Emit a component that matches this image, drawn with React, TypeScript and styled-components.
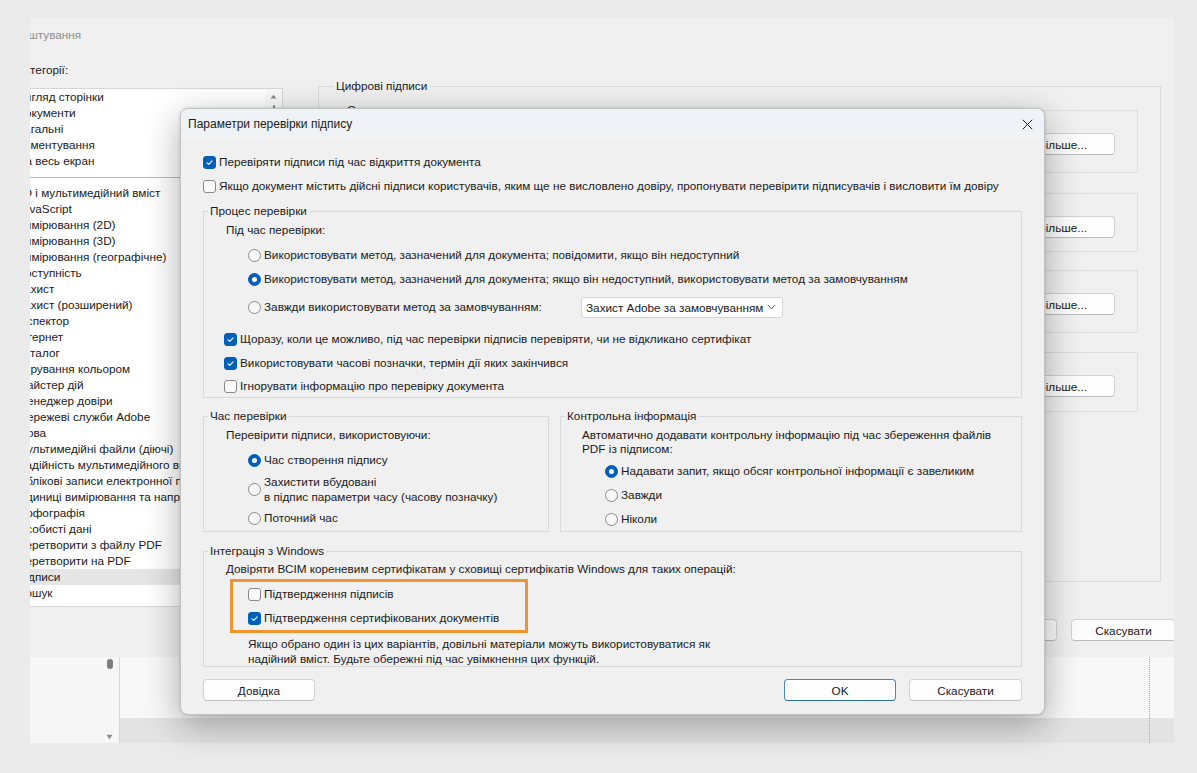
import React from "react";
import styled, { createGlobalStyle, css } from "styled-components";

const GlobalStyle = createGlobalStyle`
  html, body { margin: 0; padding: 0; }
  body {
    background: #ebebeb;
    font-family: "Liberation Sans", Arial, sans-serif;
    font-size: 11.75px;
    color: #1a1a1a;
  }
  * { box-sizing: border-box; }
`;

const Page = styled.div`
  position: relative;
  width: 1197px;
  height: 773px;
  padding: 19px 0 0 30px;
  overflow: hidden;
  background: #ebebeb;
`;

/* ---------- background preferences window (cropped) ---------- */

const Frame = styled.div`
  width: 1144px;
  height: 724px;
  overflow: hidden;
  display: flex;
  flex-direction: column;
`;

const PrefWindow = styled.div`
  flex: none;
  width: 1185px;
  height: 638px;
  margin-left: -25px;
  background: #f0f0f0;
  display: flex;
  flex-direction: column;
`;

const WinTitle = styled.div`
  height: 31px;
  display: flex;
  align-items: center;
  margin-left: -5px;
  color: #8e8e8e;
  white-space: nowrap;
`;

const WinBody = styled.div`
  height: 557px;
  display: flex;
  gap: 35px;
  padding: 0 29px 0 7px;
`;

const LeftCol = styled.div`
  width: 271px;
  display: flex;
  flex-direction: column;
`;

const CatLabel = styled.div`
  margin-top: 12px;
  height: 16px;
  line-height: 16px;
  padding-left: 5px;
`;

const CatList = styled.div`
  margin-top: 10px;
  height: 519px;
  background: #ffffff;
  border: 1px solid #d6d6d6;
  display: flex;
  overflow: hidden;
`;

const CatItems = styled.div`
  flex: 1;
  overflow: hidden;
`;

const CatItem = styled.div<{ $selected?: boolean }>`
  height: 16px;
  line-height: 16px;
  padding-left: 4px;
  white-space: nowrap;
  background: ${p => (p.$selected ? "#e5e5e5" : "transparent")};
`;

const CatSeparator = styled.div`
  height: 16px;
  display: flex;
  align-items: center;
  &::after {
    content: "";
    flex: 1;
    height: 1px;
    background: #9dc2e0;
  }
`;

const ScrollTrack = styled.div`
  width: 17px;
  background: #fafafa;
  display: flex;
  flex-direction: column;
  align-items: center;
  padding-top: 5px;
  gap: 6px;
`;

const ScrollThumb = styled.div`
  width: 2px;
  height: 12px;
  border-radius: 1px;
  background: #8a8a8a;
`;

const RightCol = styled.div`
  flex: 1;
  padding-top: 29px;
`;

const OuterGroup = styled.fieldset`
  margin: 0;
  height: 503px;
  min-width: 0;
  border: 1px solid #dcdcdc;
  padding: 0 22px 0 11px;
`;

const Legend = styled.legend`
  margin-left: 4px;
  padding: 0 2px;
  font-size: 11.75px;
  line-height: 14px;
  white-space: nowrap;
`;

const SubGroup = styled.fieldset<{ $h: number; $mt: number }>`
  margin: ${p => p.$mt}px 0 0 0;
  min-width: 0;
  height: ${p => p.$h}px;
  border: 1px solid #dedede;
  padding: 0 22px 0 10px;
`;

const WinFooter = styled.div`
  margin-top: 12px;
  display: flex;
  justify-content: flex-end;
  gap: 14px;
  padding-right: 14px;
`;

const LowerArea = styled.div`
  flex: 1;
  display: flex;
`;

const LowerLeft = styled.div`
  width: 90px;
  background: #f6f6f6;
  border-right: 1px solid #d6d6d6;
  display: flex;
  flex-direction: column;
  justify-content: space-between;
  align-items: flex-end;
  padding: 2px 6px 3px 0;
`;

const ThumbCap = styled.div`
  width: 6px;
  height: 10px;
  border-radius: 3px;
  background: #7d7d7d;
`;

const LowerRight = styled.div`
  flex: 1;
  display: flex;
  flex-direction: column;
`;

const LowerRow = styled.div<{ $band?: boolean }>`
  display: flex;
  justify-content: flex-end;
  background: ${p => (p.$band ? "#e3e3e3" : "#f8f8f8")};
  height: ${p => (p.$band ? "25px" : "auto")};
  flex: ${p => (p.$band ? "none" : "1")};
`;

const DottedGutter = styled.div`
  width: 25px;
  border-left: 1px dotted #a8a8a8;
`;

/* ---------- buttons ---------- */

const Button = styled.button<{ $w?: number; $primary?: boolean }>`
  width: ${p => p.$w ?? 105}px;
  height: 22px;
  padding: 0;
  font: inherit;
  color: #1a1a1a;
  background: #fdfdfd;
  border: 1px solid ${p => (p.$primary ? "#4a86b8" : "#d2d2d2")};
  border-bottom-color: ${p => (p.$primary ? "#2f6ea5" : "#bdbdbd")};
  border-radius: 4px;
  white-space: nowrap;
  overflow: hidden;
`;

const SubButton = styled(Button)<{ $mt: number }>`
  display: block;
  margin: ${p => p.$mt}px 0 0 auto;
`;

/* ---------- modal dialog ---------- */

const Modal = styled.div`
  position: absolute;
  left: 180px;
  top: 108px;
  width: 865px;
  height: 607px;
  background: #f0f0f0;
  border: 1px solid #c2c2c2;
  border-radius: 8px;
  box-shadow: 0 10px 36px rgba(0, 0, 0, 0.32), 0 0 3px rgba(0, 0, 0, 0.15);
  overflow: hidden;
  display: flex;
  flex-direction: column;
`;

const ModalTitle = styled.div`
  height: 30px;
  flex: none;
  display: flex;
  align-items: center;
  justify-content: space-between;
  padding-left: 7px;
  font-size: 12px;
  background: linear-gradient(#eef3f7, #f0f2f4);
`;

const CloseButton = styled.div`
  width: 34px;
  height: 30px;
  display: flex;
  align-items: center;
  justify-content: center;
`;

const ModalBody = styled.div`
  padding: 11px 22px 0 22px;
  display: flex;
  flex-direction: column;
`;

const Row = styled.div<{ $h?: number; $indent?: number; $mt?: number }>`
  display: flex;
  align-items: center;
  gap: 3px;
  height: ${p => p.$h ?? 24}px;
  padding-left: ${p => p.$indent ?? 0}px;
  margin-top: ${p => p.$mt ?? 0}px;
  white-space: nowrap;
`;

const TextLine = styled.div<{ $indent: number; $mt: number; $lh?: number }>`
  padding-left: ${p => p.$indent}px;
  margin-top: ${p => p.$mt}px;
  line-height: ${p => p.$lh ?? 16}px;
`;

const Group = styled.fieldset<{ $mt?: number; $w?: number }>`
  margin: ${p => p.$mt ?? 0}px 0 0 0;
  padding: 0;
  min-width: 0;
  border: 1px solid #d9d9d9;
  display: flex;
  flex-direction: column;
  ${p => (p.$w ? css`width: ${p.$w}px; flex: none;` : css`flex: 1;`)}
`;

const GroupRow = styled.div`
  margin-top: 11px;
  display: flex;
  gap: 11px;
`;

const Highlight = styled.div`
  width: 298px;
  margin: 2px 0 0 26px;
  border: 3px solid #f0952d;
  padding-left: 15px;
`;

const BoxMark = styled.span<{ $checked?: boolean }>`
  flex: none;
  width: 13px;
  height: 13px;
  border-radius: 3px;
  border: 1px solid ${p => (p.$checked ? "#005fb8" : "#8a8a8a")};
  background: ${p => (p.$checked ? "#005fb8" : "#fbfbfb")};
  display: inline-flex;
  align-items: center;
  justify-content: center;
`;

const RadioMark = styled.span<{ $on?: boolean }>`
  flex: none;
  width: 13px;
  height: 13px;
  border-radius: 50%;
  display: inline-flex;
  align-items: center;
  justify-content: center;
  ${p =>
    p.$on
      ? css`
          background: #005fb8;
          border: 1px solid #005fb8;
          &::after {
            content: "";
            width: 5px;
            height: 5px;
            border-radius: 50%;
            background: #ffffff;
          }
        `
      : css`
          background: #f7f7f7;
          border: 1px solid #8a8a8a;
        `}
`;

const Label = styled.span<{ $w?: number; $lh?: number }>`
  ${p => (p.$w ? css`width: ${p.$w}px; flex: none;` : "")}
  line-height: ${p => p.$lh ?? 16}px;
`;

const Select = styled.div`
  width: 202px;
  height: 21px;
  background: #ffffff;
  border: 1px solid #d4d4d4;
  border-radius: 3px;
  display: flex;
  align-items: center;
  justify-content: space-between;
  padding: 0 6px 0 4px;
`;

const ModalFooter = styled.div`
  margin-top: 12px;
  display: flex;
  align-items: center;
`;

const FooterSpacer = styled.div`
  flex: 1;
`;

const FooterGap = styled.div`
  width: 13px;
`;

const Checkbox = ({ checked }: { checked?: boolean }) => (
  <BoxMark $checked={checked}>
    {checked && (
      <svg width="9" height="9" viewBox="0 0 10 10">
        <path d="M2.2 5.3 L4.2 7.2 L7.9 3.1" stroke="#ffffff" strokeWidth="1.2" fill="none" strokeLinecap="round" strokeLinejoin="round" />
      </svg>
    )}
  </BoxMark>
);

const topCategories = ["Вигляд сторінки", "Документи", "Загальні", "Коментування", "На весь екран"];
const categories = [
  "3D і мультимедійний вміст",
  "JavaScript",
  "Вимірювання (2D)",
  "Вимірювання (3D)",
  "Вимірювання (географічне)",
  "Доступність",
  "Захист",
  "Захист (розширений)",
  "Інспектор",
  "Інтернет",
  "Каталог",
  "Керування кольором",
  "Майстер дій",
  "Менеджер довіри",
  "Мережеві служби Adobe",
  "Мова",
  "Мультимедійні файли (діючі)",
  "Надійність мультимедійного вмісту",
  "Облікові записи електронної пошти",
  "Одиниці вимірювання та напрямні",
  "Орфографія",
  "Особисті дані",
  "Перетворити з файлу PDF",
  "Перетворити на PDF",
  "Підписи",
  "Пошук",
];

// only the first caption peeks out above the dialog; the others sit behind it,
// so those boxes are drawn without a legend (border shifted by half a legend)
const subGroups = [
  { title: "Створення та вигляд", h: 70, mt: 10, btn: 16 },
  { title: "", h: 59, mt: 20, btn: 22 },
  { title: "", h: 63, mt: 18, btn: 22 },
  { title: "", h: 60, mt: 19, btn: 22 },
];

const App = () => {
  return (
    <>
      <GlobalStyle />
      <Page>
        <Frame>
          <PrefWindow>
            <WinTitle>Налаштування</WinTitle>
            <WinBody>
              <LeftCol>
                <CatLabel>Категорії:</CatLabel>
                <CatList>
                  <CatItems>
                    {topCategories.map(c => (
                      <CatItem key={c}>{c}</CatItem>
                    ))}
                    <CatSeparator />
                    {categories.map(c => (
                      <CatItem key={c} $selected={c === "Підписи"}>
                        {c}
                      </CatItem>
                    ))}
                  </CatItems>
                  <ScrollTrack>
                    <svg width="7" height="5" viewBox="0 0 7 5">
                      <path d="M0.5 4.5 L3.5 0.8 L6.5 4.5 Z" fill="#8a8a8a" />
                    </svg>
                    <ScrollThumb />
                  </ScrollTrack>
                </CatList>
              </LeftCol>
              <RightCol>
                <OuterGroup>
                  <Legend>Цифрові підписи</Legend>
                  {subGroups.map((g, i) => (
                    <SubGroup key={i} $h={g.h} $mt={g.mt}>
                      {g.title && <Legend>{g.title}</Legend>}
                      <SubButton $w={105} $mt={g.btn}>
                        Більше...
                      </SubButton>
                    </SubGroup>
                  ))}
                </OuterGroup>
              </RightCol>
            </WinBody>
            <WinFooter>
              <Button $w={105}>OK</Button>
              <Button $w={105}>Скасувати</Button>
            </WinFooter>
          </PrefWindow>
          <LowerArea>
            <LowerLeft>
              <ThumbCap />
              <svg width="7" height="6" viewBox="0 0 7 6">
                <path d="M0.5 0.8 L6.5 0.8 L3.5 5.2 Z" fill="#8a8a8a" />
              </svg>
            </LowerLeft>
            <LowerRight>
              <LowerRow>
                <DottedGutter />
              </LowerRow>
              <LowerRow $band>
                <DottedGutter />
              </LowerRow>
            </LowerRight>
          </LowerArea>
        </Frame>

        <Modal>
          <ModalTitle>
            <span>Параметри перевірки підпису</span>
            <CloseButton>
              <svg width="11" height="11" viewBox="0 0 11 11">
                <path d="M0.8 0.8 L10.2 10.2 M10.2 0.8 L0.8 10.2" stroke="#222222" strokeWidth="1" />
              </svg>
            </CloseButton>
          </ModalTitle>
          <ModalBody>
            <Row>
              <Checkbox checked />
              <Label>Перевіряти підписи під час відкриття документа</Label>
            </Row>
            <Row>
              <Checkbox />
              <Label>
                Якщо документ містить дійсні підписи користувачів, яким ще не висловлено довіру, пропонувати перевірити підписувачів і висловити їм довіру
              </Label>
            </Row>

            <Group $mt={6}>
              <Legend>Процес перевірки</Legend>
              <TextLine $indent={22} $mt={4}>Під час перевірки:</TextLine>
              <Row $indent={44} $mt={5}>
                <RadioMark />
                <Label>Використовувати метод, зазначений для документа; повідомити, якщо він недоступний</Label>
              </Row>
              <Row $indent={44}>
                <RadioMark $on />
                <Label>
                  Використовувати метод, зазначений для документа; якщо він недоступний, використовувати метод за замовчуванням
                </Label>
              </Row>
              <Row $indent={44} $mt={4}>
                <RadioMark />
                <Label $w={314}>Завжди використовувати метод за замовчуванням:</Label>
                <Select>
                  <span>Захист Adobe за замовчуванням</span>
                  <svg width="9" height="6" viewBox="0 0 9 6">
                    <path d="M0.8 1 L4.5 4.7 L8.2 1" stroke="#555555" strokeWidth="1" fill="none" />
                  </svg>
                </Select>
              </Row>
              <Row $indent={20} $mt={8}>
                <Checkbox checked />
                <Label>Щоразу, коли це можливо, під час перевірки підписів перевіряти, чи не відкликано сертифікат</Label>
              </Row>
              <Row $indent={20}>
                <Checkbox checked />
                <Label>Використовувати часові позначки, термін дії яких закінчився</Label>
              </Row>
              <Row $indent={20} $h={22}>
                <Checkbox />
                <Label>Ігнорувати інформацію про перевірку документа</Label>
              </Row>
            </Group>

            <GroupRow>
              <Group $w={346}>
                <Legend>Час перевірки</Legend>
                <TextLine $indent={22} $mt={4}>Перевірити підписи, використовуючи:</TextLine>
                <Row $indent={44} $mt={5}>
                  <RadioMark $on />
                  <Label>Час створення підпису</Label>
                </Row>
                <Row $indent={44} $h={34}>
                  <RadioMark />
                  <Label $lh={15}>
                    Захистити вбудовані
                    <br />
                    в підпис параметри часу (часову позначку)
                  </Label>
                </Row>
                <Row $indent={44}>
                  <RadioMark />
                  <Label>Поточний час</Label>
                </Row>
              </Group>
              <Group>
                <Legend>Контрольна інформація</Legend>
                <TextLine $indent={21} $mt={5} $lh={14}>
                  Автоматично додавати контрольну інформацію під час збереження файлів
                  <br />
                  PDF із підписом:
                </TextLine>
                <Row $indent={44} $mt={3}>
                  <RadioMark $on />
                  <Label>Надавати запит, якщо обсяг контрольної інформації є завеликим</Label>
                </Row>
                <Row $indent={44}>
                  <RadioMark />
                  <Label>Завжди</Label>
                </Row>
                <Row $indent={44}>
                  <RadioMark />
                  <Label>Ніколи</Label>
                </Row>
              </Group>
            </GroupRow>

            <Group $mt={12}>
              <Legend>Інтеграція з Windows</Legend>
              <TextLine $indent={22} $mt={3}>
                Довіряти ВСІМ кореневим сертифікатам у сховищі сертифікатів Windows для таких операцій:
              </TextLine>
              <Highlight>
                <Row>
                  <Checkbox />
                  <Label>Підтвердження підписів</Label>
                </Row>
                <Row>
                  <Checkbox checked />
                  <Label>Підтвердження сертифікованих документів</Label>
                </Row>
              </Highlight>
              <TextLine $indent={44} $mt={3} $lh={15}>
                Якщо обрано один із цих варіантів, довільні матеріали можуть використовуватися як
                <br />
                надійний вміст. Будьте обережні під час увімкнення цих функцій.
              </TextLine>
            </Group>

            <ModalFooter>
              <Button $w={112}>Довідка</Button>
              <FooterSpacer />
              <Button $w={112} $primary>
                OK
              </Button>
              <FooterGap />
              <Button $w={113}>Скасувати</Button>
            </ModalFooter>
          </ModalBody>
        </Modal>
      </Page>
    </>
  );
};

export default App;
